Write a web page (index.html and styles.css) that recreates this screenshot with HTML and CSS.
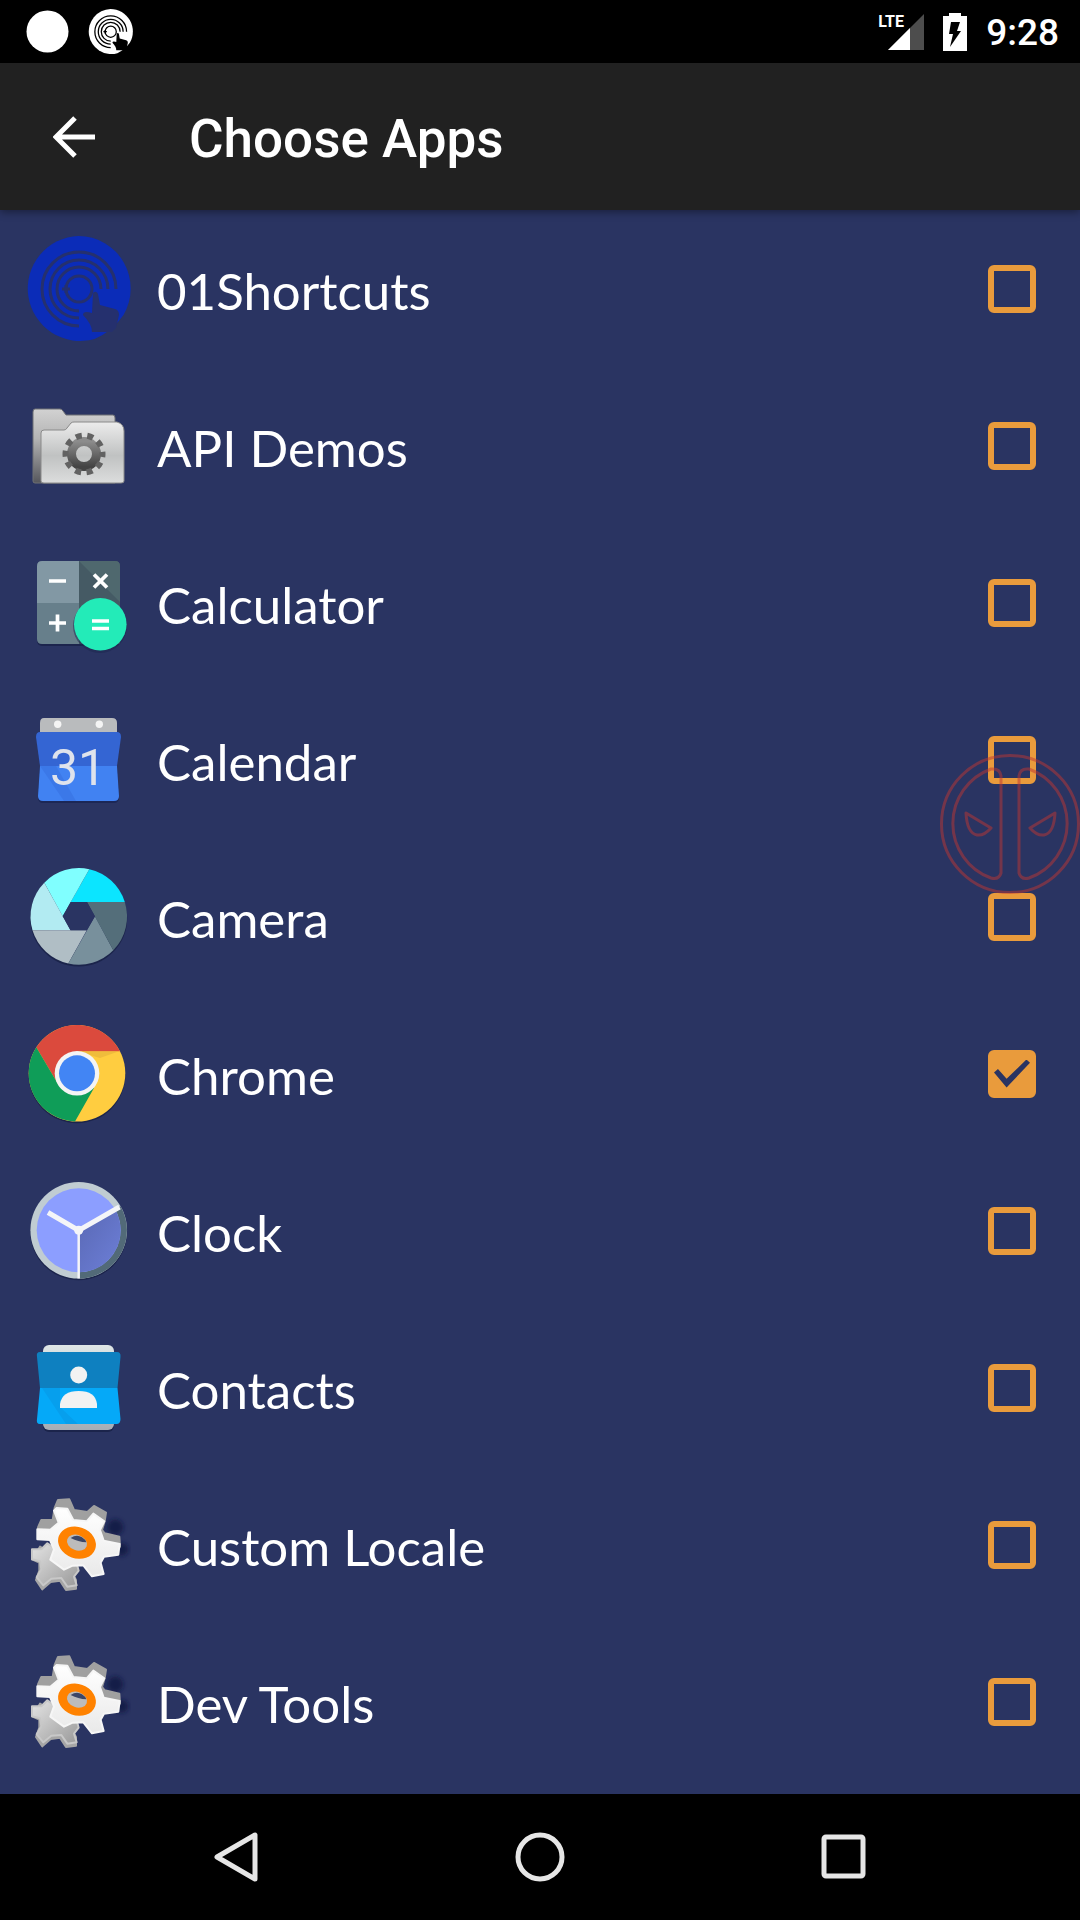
FILE: index.html
```html
<!DOCTYPE html>
<html lang="en">
<head>
<meta charset="utf-8">
<meta name="viewport" content="width=device-width, initial-scale=1">
<title>Choose Apps</title>
<link rel="stylesheet" href="styles.css">
</head>
<body>
<svg class="defs" aria-hidden="true">
  <defs>
    <linearGradient id="folderBack" x1="0" y1="0" x2="0" y2="1"><stop offset="0" stop-color="#d2d2d2"/><stop offset=".4" stop-color="#b4b4b4"/><stop offset="1" stop-color="#55565c"/></linearGradient>
    <linearGradient id="folderFront" x1="0" y1="0" x2="0" y2="1"><stop offset="0" stop-color="#ececec"/><stop offset=".55" stop-color="#c0c2c2"/><stop offset="1" stop-color="#dcdddd"/></linearGradient>
    <linearGradient id="cogDark" x1="0" y1="0" x2="0" y2="1"><stop offset="0" stop-color="#8c8c8c"/><stop offset="1" stop-color="#444"/></linearGradient>
    <linearGradient id="paper" x1="0" y1="0" x2="0" y2="1"><stop offset="0" stop-color="#dfe6e6"/><stop offset="1" stop-color="#a6adb5"/></linearGradient>
    <linearGradient id="cogWhite" x1="0" y1="0" x2="0" y2="1"><stop offset="0" stop-color="#fff"/><stop offset="1" stop-color="#e9e9e9"/></linearGradient>
    <linearGradient id="cogGray" x1="0" y1="0" x2="1" y2="1"><stop offset="0" stop-color="#e4e4e4"/><stop offset="1" stop-color="#999"/></linearGradient>
    <linearGradient id="clockShade" x1="0" y1="0" x2="1" y2="1"><stop offset="0" stop-color="#5968b4"/><stop offset="1" stop-color="#6d7fd8"/></linearGradient>
    <filter id="soft" x="-50%" y="-50%" width="200%" height="200%"><feGaussianBlur stdDeviation="6"/></filter>
    <symbol id="gears" viewBox="0 0 105 105">
      <g transform="translate(-16 -12) scale(.3333)" stroke-linejoin="round" stroke-width="6">
        <g fill="#101840" opacity=".75" filter="url(#soft)"><circle cx="316" cy="142" r="24"/><circle cx="335" cy="208" r="20"/></g>
        <path fill="#a6a6a6" stroke="#a6a6a6" d="M66 238L88 248L88 272L78 300L97 328L122 306L150 302L168 330L198 326L198 300L170 250L90 200z"/>
        <path fill="url(#cogGray)" stroke="#c8c8c8" d="M66 208L94 208L112 190L200 250L206 272L192 290L200 316L172 320L154 294L124 296L100 316L80 292L94 268L90 244L66 238z"/>
        <path fill="#a0a0a0" stroke="#a0a0a0" d="M134 84L144 60L178 58L192 90L232 96L252 78L288 98L284 124L276 150L284 160L328 170L330 200L280 200L180 160L90 160L84 142L94 120L128 120z"/>
        <path fill="url(#cogWhite)" stroke="#f6f6f6" d="M132 92L140 84L172 86L190 120L230 124L250 101L283 124L270 150L281 182L329 192L325 224L282 230L272 248L281 282L246 289L220 256L188 257L162 269L121 239L132 208L120 180L82 178L82 148L121 149L146 128z"/>
        <ellipse cx="201" cy="188" rx="58" ry="47" fill="#ff8200" transform="rotate(20 201 188)"/>
        <ellipse cx="201" cy="188" rx="31" ry="23" fill="#bcbcbc" transform="rotate(20 201 188)"/>
        <path fill="#3c4666" d="M182 174q18-12 34-2 10 6 13 15-24-1-47-13z"/>
      </g>
    </symbol>
    <symbol id="touch" viewBox="0 0 105 105">
      <path class="touch-disc" d="M52.500 0a52.500 52.500 0 0 1 45 79q-12 17-29 24a52.500 52.500 0 1 1-16-103z"/>
      <g class="touch-line" fill="none" stroke-width="3">
        <path d="M90 53A37 37 0 1 0 53 90"/><path d="M82 53A29 29 0 1 0 53 82"/><path d="M75 53A22 22 0 1 0 53 75"/><circle cx="53" cy="53" r="13"/><path d="M36 53h8M40 49v8"/>
      </g>
      <path class="touch-hand" d="M67 57q3-3 5 1l2 11 15 4q4 1 4 6l-3 13-4 4H66q0-8-9-17 0-5 9-2z"/>
    </symbol>
  </defs>
</svg>

<header class="status">
  <div class="status-side">
    <svg class="dot" viewBox="0 0 44 44" aria-hidden="true"><circle cx="22" cy="22" r="21.500" fill="#fff"/></svg>
    <svg class="touch-white" viewBox="0 0 105 105" aria-hidden="true"><use href="#touch"/></svg>
  </div>
  <div class="status-side">
    <div class="network">
      <span class="lte">LTE</span>
      <svg class="signal" viewBox="0 0 36 36" aria-hidden="true"><path fill="#4d4d4d" d="M36 0v36H0z"/><path fill="#fff" d="M22 14v22H0z"/></svg>
    </div>
    <svg class="battery" viewBox="0 0 24 38" aria-hidden="true"><path fill="#fff" d="M6 0h12v3h6v35H0V3h6z"/><path fill="#000" d="M8 9h9l-3 9h4L7 34l3-13H6z"/></svg>
    <time class="clock">9:28</time>
  </div>
</header>

<div class="toolbar">
  <button class="back" type="button" aria-label="Back"><svg viewBox="0 0 42 42" aria-hidden="true"><path d="M42 21H4M22 2L3 21l19 19" fill="none" stroke="#fff" stroke-width="5"/></svg></button>
  <h1 class="title">Choose Apps</h1>
</div>

<main class="content">
  <ul class="apps">
    <li><label class="app"><svg class="icon touch-blue" viewBox="0 0 105 105" aria-hidden="true"><use href="#touch"/></svg><span class="name">01Shortcuts</span><input class="check" type="checkbox"></label></li>

    <li><label class="app"><svg class="icon" viewBox="0 0 105 105" aria-hidden="true">
      <path fill="url(#folderBack)" stroke="#6f7074" d="M9 16h25q2 0 3 2l3 4h47q2 0 2 3v65H9q-2 0-2-2V19q0-3 2-3z"/>
      <path fill="url(#folderFront)" stroke="#8a8a8a" d="M18 37h20q2 0 3-2l4-5q1-1 3-1h43q7 2 7 9v50q0 2-3 2H18q-3 0-3-2V40q0-3 3-3z"/>
      <circle cx="58" cy="61" r="12.500" fill="none" stroke="url(#cogDark)" stroke-width="9"/>
      <circle cx="58" cy="61" r="18.500" fill="none" stroke="#626262" stroke-width="6" stroke-dasharray="6 5.620" stroke-dashoffset="3"/>
    </svg><span class="name">API Demos</span><input class="check" type="checkbox"></label></li>

    <li><label class="app"><svg class="icon" viewBox="0 0 105 105" aria-hidden="true">
      <rect x="11" y="12" width="83" height="84" rx="5" fill="#1c254d"/>
      <path fill="#8298a4" d="M16 11h37v42H11V16q0-5 5-5z"/><path fill="#455a64" d="M53 11h36q5 0 5 5v37H53z"/><path fill="#677f8b" d="M11 53h42v41H16q-5 0-5-5z"/><path fill="#455a64" d="M53 53h41v41H53z"/>
      <path fill="#4f686e" d="M53 11l41 41V16q0-5-5-5z"/>
      <circle cx="74" cy="76" r="27" fill="#1c254d" opacity=".5"/><circle cx="74.300" cy="74.300" r="26.300" fill="#23ebb8"/>
      <path fill="none" stroke="#fff" stroke-width="3.700" d="M23 31h17M23 73h17M31.500 64.500v17M68 24.500l13 13M81 24.500l-13 13M66 71h17M66 78.500h17"/>
    </svg><span class="name">Calculator</span><input class="check" type="checkbox"></label></li>

    <li><label class="app"><svg class="icon" viewBox="0 0 105 105" aria-hidden="true">
      <path fill="#b9bbbd" d="M18 11h68q5 0 5 5v10H14V16q0-5 4-5z"/><circle cx="31.700" cy="17.300" r="3.700" fill="#f4f4f4"/><circle cx="73.300" cy="17.300" r="3.700" fill="#f4f4f4"/>
      <path fill="#1c2756" d="M14 60h77l2 30q0 6-5 6H17q-5 0-5-6z"/>
      <path fill="#3465d3" d="M14 25h77q4 0 4 5l-4 29H14l-4-29q0-5 4-5z"/><path fill="#4182f2" d="M14 59h77l2 30q0 5-5 5H17q-5 0-5-5z"/><path fill="#3973e4" d="M14 59h16l20 35H38z" opacity=".7"/>
      <text class="day" x="52" y="78" text-anchor="middle">31</text>
    </svg><span class="name">Calendar</span><input class="check" type="checkbox"></label></li>

    <li><label class="app"><svg class="icon" viewBox="0 0 105 105" aria-hidden="true">
      <circle cx="52.700" cy="54" r="40" fill="none" stroke="#1b244b" stroke-width="17"/>
      <path fill="#0be5ff" d="M63.300 5.200A48.300 48.300 0 0 1 98.800 38H44.700z"/>
      <path fill="#80ffff" d="M18.300 18.700A48.300 48.300 0 0 1 63.300 5.200L36.700 52.300z"/>
      <path fill="#b2ebf2" d="M6.500 66.300A48.300 48.300 0 0 1 18.300 18.700L44.500 66.300z"/>
      <path fill="#b0bec5" d="M42.300 99.500A48.300 48.300 0 0 1 6.500 66.300H60.700z"/>
      <path fill="#78909c" d="M87.300 86.300A48.300 48.300 0 0 1 42.300 99.500L69 52.300z"/>
      <path fill="#546e7a" d="M98.800 38A48.300 48.300 0 0 1 87.300 86.300L61 38z"/>
      <path fill="#2a3462" d="M36.700 52.300L44.700 38H61l8 14.300-8.300 14H44.500z"/>
    </svg><span class="name">Camera</span><input class="check" type="checkbox"></label></li>

    <li><label class="app"><svg class="icon" viewBox="0 0 105 105" aria-hidden="true">
      <circle cx="51" cy="54" r="48.300" fill="#1b244b"/><circle cx="51" cy="52.300" r="48.300" fill="#ffcd40"/>
      <path fill="#db4a3d" d="M10.300 26.300A48.300 48.300 0 0 1 94 30.300H51L32 63z"/>
      <path fill="#0f9d58" d="M49 100.600A48.300 48.300 0 0 1 10.300 26.300L32 63l36 4z"/>
      <path fill="#e5b13b" d="M51 30.300h42L74 37z" opacity=".6"/>
      <circle cx="51" cy="52.300" r="22.300" fill="#f4f4f4"/><circle cx="51" cy="52.300" r="18" fill="#4285f4"/>
    </svg><span class="name">Chrome</span><input class="check" type="checkbox" checked></label></li>

    <li><label class="app"><svg class="icon" viewBox="0 0 105 105" aria-hidden="true">
      <circle cx="52.700" cy="54" r="48.300" fill="#1b244b"/><circle cx="52.700" cy="52.300" r="48.300" fill="#c0ccd2"/>
      <path fill="#526a78" d="M52.700 52.300L94.500 28.200A48.300 48.300 0 0 1 52.700 100.600z"/>
      <circle cx="52.700" cy="52.300" r="42" fill="#8c9eff"/>
      <path fill="url(#clockShade)" d="M52.700 52.300L89 31.300A42 42 0 0 1 52.700 94.300z"/>
      <path fill="none" stroke="#f4f5f8" stroke-width="5" d="M22 34.500l30.700 17.800L93.500 29"/><path stroke="#f4f5f8" stroke-width="2.500" d="M52.700 52v48.500"/><circle cx="52.700" cy="52.300" r="4.500" fill="#f4f5f8"/>
    </svg><span class="name">Clock</span><input class="check" type="checkbox"></label></li>

    <li><label class="app"><svg class="icon" viewBox="0 0 105 105" aria-hidden="true">
      <rect x="17" y="12" width="71" height="85" rx="6" fill="#1b244b"/><rect x="17" y="10" width="71" height="85" rx="6" fill="url(#paper)"/>
      <path fill="#0e80c0" d="M14 17h77q4 0 3.500 5l-3 31H14l-3-31q-1-5 3-5z"/><path fill="#05a9f8" d="M14 53h77.500l3 31q0 5-4 5H14q-4 0-3-5z"/><path fill="#079ae6" d="M16 53h18v19l18 17H40z" opacity=".6"/>
      <circle cx="52.700" cy="40" r="8.500" fill="#f2f2f2"/><path fill="#f2f2f2" d="M34 73v-4q2-13 18.700-13T71 69v4z"/>
    </svg><span class="name">Contacts</span><input class="check" type="checkbox"></label></li>

    <li><label class="app"><svg class="icon" viewBox="0 0 105 105" aria-hidden="true"><use href="#gears"/></svg><span class="name">Custom Locale</span><input class="check" type="checkbox"></label></li>
    <li><label class="app"><svg class="icon" viewBox="0 0 105 105" aria-hidden="true"><use href="#gears"/></svg><span class="name">Dev Tools</span><input class="check" type="checkbox"></label></li>
  </ul>
  <svg class="floating" viewBox="0 0 140 140" aria-hidden="true">
    <g fill="none" stroke="#be3634" stroke-width="3"><circle cx="70" cy="70" r="68.500"/>
    <path d="M61 119V22q-1-8-10-7A58 58 0 0 0 51 124q8 2 10-5zM79 119V22q1-8 10-7A58 58 0 0 1 89 124q-8 2-10-5z"/>
    <path d="M26 59q1 20 11 22 7 1 14-7zM115 59q-1 20-11 22-7 1-14-7z" stroke-linejoin="round"/></g>
  </svg>
</main>

<nav class="navbar" aria-label="System">
  <button type="button" aria-label="Back"><svg viewBox="0 0 50 50" aria-hidden="true"><path d="M44 3v44L6 25z" stroke-linejoin="round"/></svg></button>
  <button type="button" aria-label="Home"><svg viewBox="0 0 50 50" aria-hidden="true"><circle cx="25" cy="25" r="22"/></svg></button>
  <button type="button" aria-label="Recent apps"><svg viewBox="0 0 50 50" aria-hidden="true"><rect x="5" y="5" width="39" height="39" rx="2"/></svg></button>
</nav>
</body>
</html>
```
FILE: styles.css
```css
* { box-sizing: border-box; }

body {
  margin: 0;
  min-height: 100vh;
  display: flex;
  flex-direction: column;
  background: #2a3462;
  color: #fff;
  font-family: Roboto, "Liberation Sans", sans-serif;
}

button {
  padding: 0;
  border: 0;
  background: none;
  color: inherit;
}

svg { display: block; flex: none; }

.defs { position: absolute; width: 0; height: 0; }

.status {
  display: flex;
  justify-content: space-between;
  height: 63px;
  padding: 0 21px 0 26px;
  background: #000;
}

.status-side { display: flex; align-items: center; gap: 19px; }

.dot { width: 43px; height: 43px; }
.touch-white { width: 45px; height: 45px; }
.touch-white { --disc: #fff; --line: #000; }
.touch-blue { --disc: #0b2cb8; --line: #25306e; }
.touch-disc { fill: var(--disc); }
.touch-line { stroke: var(--line); }
.touch-hand { fill: var(--line); }

.network { position: relative; width: 46px; height: 38px; }
.signal { position: absolute; right: 0; bottom: 1px; width: 36px; height: 36px; }
.lte {
  position: absolute;
  left: 0;
  top: 0;
  font-size: 16px;
  line-height: 18px;
  font-weight: 700;
}
.battery { width: 24px; height: 38px; }
.clock { font-size: 37px; line-height: 44px; font-weight: 500; padding-top: 2px; }

.toolbar {
  position: relative;
  z-index: 1;
  display: flex;
  align-items: center;
  gap: 94px;
  height: 147px;
  padding: 0 53px;
  background: #212121;
  box-shadow: 0 2px 8px rgba(0, 0, 0, .4);
}
.back svg { width: 42px; height: 42px; }
.title { margin: 0; padding-top: 4px; font-size: 53px; line-height: 64px; font-weight: 500; }

.content { position: relative; flex: 1; }

.apps { margin: 0; padding: 0; list-style: none; }

.app {
  display: flex;
  align-items: center;
  gap: 26px;
  height: 157px;
  padding: 0 44px 0 26px;
}
.icon { width: 105px; height: 105px; overflow: visible; }
.name {
  flex: 1;
  padding-top: 4px;
  font: 400 51px/72px Lato, sans-serif;
}
.day { font: 400 50px Roboto, sans-serif; fill: #dfe3ec; }

.check {
  appearance: none;
  display: grid;
  width: 48px;
  height: 48px;
  margin: 0;
  border: 6px solid #e99b3c;
  border-radius: 6px;
}
.check:checked { background: #e99b3c; }
.check:checked::before {
  content: "";
  place-self: center;
  width: 36px;
  height: 28px;
  background: #2a3462;
  clip-path: polygon(0 46%, 11% 34%, 35% 69%, 90% 0, 100% 12%, 35% 100%);
}

.floating {
  position: absolute;
  right: 0;
  top: 544px;
  width: 140px;
  height: 140px;
  opacity: .5;
  pointer-events: none;
}

.navbar {
  display: flex;
  height: 126px;
  padding: 0 84px;
  background: #000;
}
.navbar button { flex: 1; display: grid; place-items: center; }
.navbar svg { width: 50px; height: 50px; fill: none; stroke: #e6e6e6; stroke-width: 5; }
```
